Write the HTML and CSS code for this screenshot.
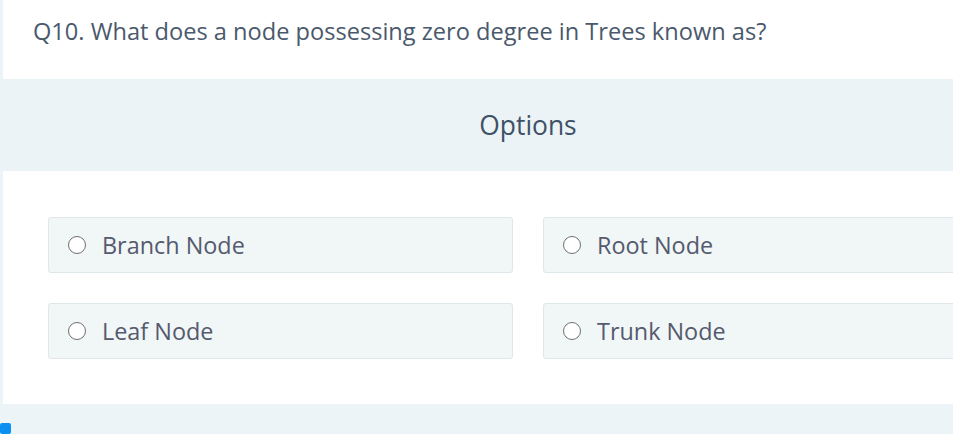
FILE: index.html
```html
<!DOCTYPE html>
<html>
<head>
<meta charset="utf-8">
<link rel="stylesheet" href="styles.css">
</head>
<body>
<div class="page">
  <div class="card">
    <div class="question">Q10. What does a node possessing zero degree in Trees known as?</div>
    <div class="options-head">Options</div>
    <div class="options">
      <label class="opt"><span class="radio"></span><span class="lbl">Branch Node</span></label>
      <label class="opt"><span class="radio"></span><span class="lbl">Root Node</span></label>
      <label class="opt"><span class="radio"></span><span class="lbl">Leaf Node</span></label>
      <label class="opt"><span class="radio"></span><span class="lbl">Trunk Node</span></label>
    </div>
  </div>
  <div class="footer"><span class="dot"></span></div>
</div>
</body>
</html>
```
FILE: styles.css
```css
html, body {
  margin: 0;
  padding: 0;
  overflow: hidden;
  background: #edf4f8;
}
body {
  width: 953px;
  height: 434px;
  font-family: "Open Sans", sans-serif;
}
.page {
  width: 1100px;
  padding-left: 3px;
}
.card {
  width: 1050px;
  background: #ffffff;
}
.question {
  height: 79px;
  box-sizing: border-box;
  padding: 14px 0 0 30px;
  font-size: 23.6px;
  color: #4a596c;
  line-height: 34px;
}
.options-head {
  margin-left: -3px;
  height: 92px;
  background: #ecf3f7;
  display: flex;
  align-items: center;
  justify-content: center;
  font-size: 26.4px;
  color: #3e5166;
  padding-left: 3px;
}
.options {
  display: grid;
  grid-template-columns: 465px 465px;
  column-gap: 30px;
  row-gap: 30px;
  padding: 46px 45px 45px;
}
.opt {
  height: 56px;
  box-sizing: border-box;
  background: #f1f6f7;
  border: 1px solid #e0e7ea;
  border-radius: 3px;
  display: flex;
  align-items: center;
  padding-left: 19px;
}
.radio {
  width: 18px;
  height: 18px;
  box-sizing: border-box;
  border: 1.5px solid #707070;
  border-radius: 50%;
  background: #fff;
  flex: none;
}
.lbl {
  margin-left: 16px;
  font-size: 23.4px;
  color: #555a6e;
}
.footer {
  position: relative;
  height: 40px;
  margin-left: -3px;
}
.dot {
  position: absolute;
  left: 0;
  top: 19px;
  width: 11px;
  height: 11px;
  background: #0a90f0;
  border-radius: 2px;
}
```
